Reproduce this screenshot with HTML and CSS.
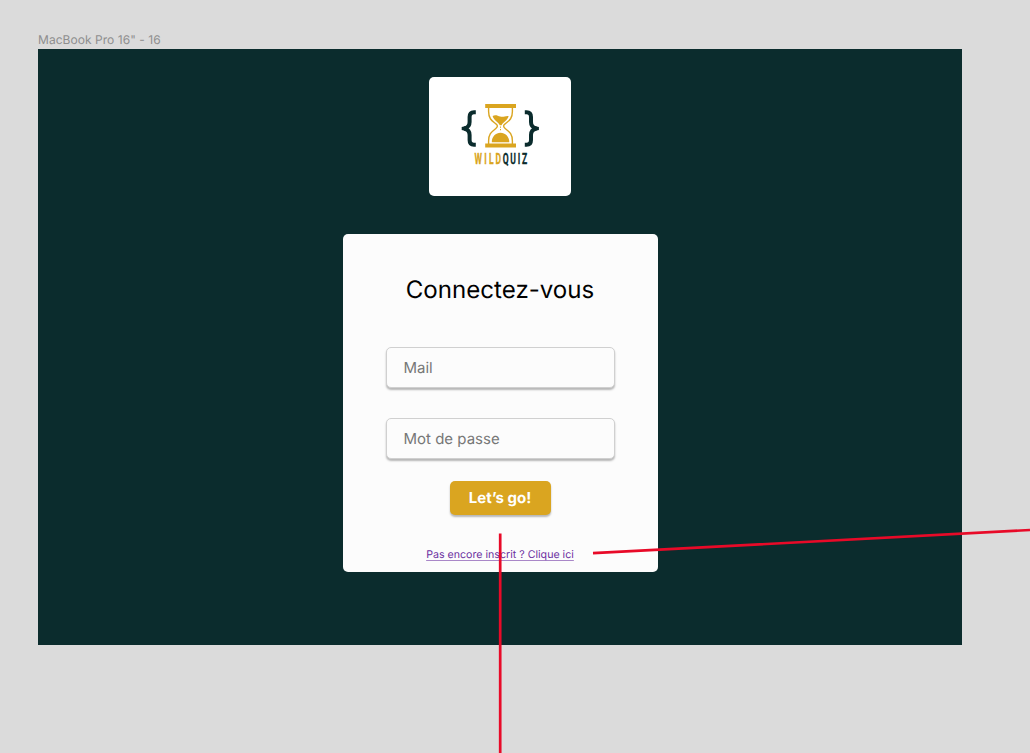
FILE: index.html
```html
<!DOCTYPE html>
<html lang="fr">
<head>
<meta charset="utf-8">
<title>WildQuiz</title>
<link rel="stylesheet" href="styles.css">
</head>
<body>
<div class="canvas">
  <div class="frame-label">MacBook Pro 16" - 16</div>
  <main class="frame">
    <div class="logo-card">
      <svg class="logo" viewBox="455 98 90 72" role="img" aria-label="WildQuiz">
        <g class="brace">
          <path d="M475.800 112.200h-1.800q-4.400 0-4.400 4.800v5q0 5.200-5.200 6.500q5.200 1.300 5.200 6.500v5q0 4.800 4.400 4.800h1.800"/>
          <path d="M524.800 112.200h1.800q4.400 0 4.400 4.800v5q0 5.200 5.200 6.500q-5.200 1.300-5.200 6.500v5q0 4.800-4.400 4.800h-1.800"/>
          <path class="tip" d="M466 126l-4.300 1.100v2.800l4.300 1.100zM534.600 126l4.300 1.100v2.800l-4.300 1.100z"/>
        </g>
        <path class="gold" d="M485.200 104h30.800v4h-30.800zM485.200 143.500h30.800v4h-30.800z"/>
        <path class="glass" d="M488.600 108v3.500c0 7.500 3.600 9.400 7 12.200q3.600 2.200 0 5.100c-3.800 3-7 4.800-7 12.200v3M512.400 108v3.500c0 7.500-3.600 9.400-7 12.200q-3.600 2.200 0 5.100c3.800 3 7 4.800 7 12.200v3"/>
        <path class="gold" d="M492.600 116c2.500-1.700 5-.5 7.600.5 3.200 1 4.800-.9 8.400-.5-.8 4.300-5.400 5.900-7.100 9.200h-1.700c-1.600-3.500-6.100-4.900-7.200-9.200zM491.800 142.200c0-5.800 4-9.400 8.700-9.400s8.800 3.600 8.800 9.400zM500 126.400h1v1.300h-1zM500 129h1v1.300h-1z"/>
        <g class="wordmark" transform="scale(.55 1)">
          <text class="gold" y="164.200" x="862.700 880.300 889.300 900.800">WILD</text>
          <text class="dark" y="164.200" x="914.200 927.600 941.300 949.300">QUIZ</text>
        </g>
      </svg>
    </div>
    <form class="login">
      <h1>Connectez-vous</h1>
      <input type="text" placeholder="Mail" aria-label="Mail">
      <input type="password" placeholder="Mot de passe" aria-label="Mot de passe">
      <button type="button">Let’s go!</button>
      <a href="#">Pas encore inscrit ? Clique ici</a>
    </form>
  </main>
  <svg class="connectors" viewBox="0 0 1030 753" aria-hidden="true">
    <path d="M500.200 533.500V753M593 553.200L1030 530"/>
  </svg>
</div>
</body>
</html>
```

FILE: styles.css
```css
* { box-sizing: border-box; }
body { margin: 0; background: #dbdbdb; font-family: Inter, sans-serif; text-rendering: geometricPrecision; }
.canvas { position: relative; width: 1030px; height: 753px; padding: 31px 0 0 38px; overflow: hidden; }
.frame-label { height: 17.700px; font-size: 12px; line-height: 17px; letter-spacing: .05px; color: #8e8e8e; white-space: nowrap; }
.frame { width: 924px; height: 596px; padding-top: 28.300px; background: #0b2c2d; display: flex; flex-direction: column; align-items: center; }
.logo-card { width: 142px; height: 119.500px; border-radius: 5px; background: #fff; padding: 21px 0 0 26px; }
.logo { display: block; width: 90px; height: 72px; }
.brace path { fill: none; stroke: #0b2c2d; stroke-width: 4px; stroke-linejoin: bevel; }
.brace .tip { fill: #0b2c2d; stroke: none; }
.gold { fill: #daa520; }
.dark { fill: #0b2c2d; }
.glass { fill: none; stroke: #daa520; stroke-width: 1.400px; }
.wordmark { font: 700 15.500px Roboto, sans-serif; }
.wordmark text { stroke: #daa520; stroke-width: .3px; }
.wordmark .dark { stroke: #0b2c2d; }
.login { width: 315px; height: 338px; margin-top: 38px; border-radius: 5px; background: #fcfcfc; display: flex; flex-direction: column; align-items: center; }
.login h1 { margin: 40px 0 41px; font-size: 24.100px; line-height: 32px; font-weight: 400; color: #000; }
.login input { width: 229px; height: 41px; margin: 0 0 29.500px; padding: 0 17px; border: 1px solid #d0d0d0; border-radius: 5px; background: #fcfcfc; box-shadow: 0 2px 2px rgba(0, 0, 0, .28); font: 400 15px Inter, sans-serif; text-rendering: inherit; }
.login input::placeholder { color: #777; opacity: 1; }
.login button { width: 101px; height: 34px; margin-top: -7.500px; padding: 0 0 1px; border: 0; border-radius: 5px; background: #daa520; box-shadow: 0 2px 2px rgba(0, 0, 0, .28); color: #fff; font: 700 15px Inter, sans-serif; text-rendering: inherit; }
.login a { margin-top: 33px; font-size: 10.650px; line-height: 14px; color: #6b2fa0; text-decoration: underline; text-decoration-color: #a987c8; text-underline-offset: 2px; text-decoration-skip-ink: none; white-space: nowrap; }
.connectors { position: absolute; inset: 0; width: 1030px; height: 753px; pointer-events: none; }
.connectors path { fill: none; stroke: #e80a28; stroke-width: 2.700px; }
```
